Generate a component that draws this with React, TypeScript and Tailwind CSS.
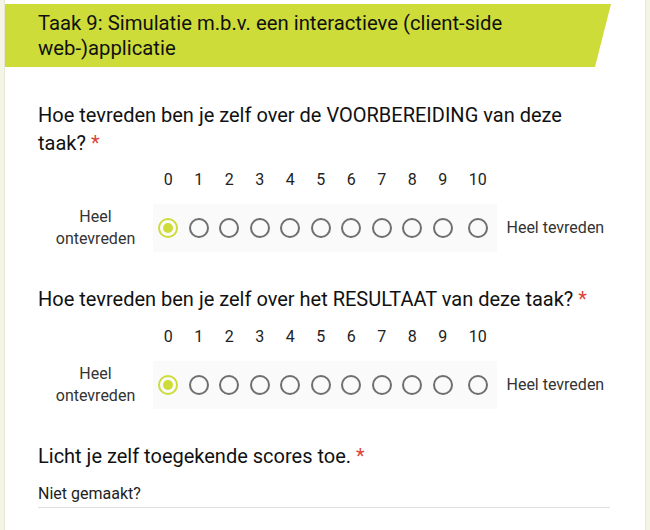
import React, { useState } from 'react';

const points = [0, 1, 2, 3, 4, 5, 6, 7, 8, 9, 10];

const Scale = ({ value, onChange, gap }: { value: number; onChange: (v: number) => void; gap: string }) => {
    return (
        <div className={'flex ' + gap}>
            <div className="w-[115px] flex flex-col justify-end">
                <div className="h-[48px] flex flex-col justify-center items-center text-[16px] leading-[22px] text-[#333]">
                    <span>Heel</span>
                    <span>ontevreden</span>
                </div>
            </div>
            {points.map((p) => (
                <div key={p} className="flex flex-col">
                    <div className="px-[10.75px] text-center text-[16px] leading-[20px] text-[#222] mb-[14px]">{p}</div>
                    <div className="h-[48px] flex items-center justify-center bg-[#fafafa]">
                        <button
                            type="button"
                            onClick={() => onChange(p)}
                            className={
                                p === value
                                    ? 'w-[20px] h-[20px] rounded-full border-2 border-[#cddc39] flex items-center justify-center'
                                    : 'w-[20px] h-[20px] rounded-full border-2 border-[#6f6f6f] flex items-center justify-center'
                            }
                        >
                            {p === value && <span className="w-[10px] h-[10px] rounded-full bg-[#cddc39]"></span>}
                        </button>
                    </div>
                </div>
            ))}
            <div className="flex flex-col justify-end">
                <div className="h-[48px] flex items-center pl-[9px] text-[16px] text-[#333]">Heel tevreden</div>
            </div>
        </div>
    );
};

const Required = () => <span className="text-[#db4437] ml-[5px]">*</span>;

const App = () => {
    const [prep, setPrep] = useState(0);
    const [result, setResult] = useState(0);
    const [note, setNote] = useState('Niet gemaakt?');

    return (
        <div className="min-h-screen bg-[#f4f5e4] px-[4px] font-['Roboto',sans-serif]">
            <div className="bg-white min-h-[530px] border-x border-[#e6e7d8] pt-[4px]">
                <div
                    className="h-[63px] bg-[#cddc39] pl-[33px] pr-[40px] pt-[7px] text-[20.3px] leading-[25px] text-[#111] w-[606px]"
                    style={{ clipPath: 'polygon(0 0, 100% 0, calc(100% - 16px) 100%, 0 100%)' }}
                >
                    Taak 9: Simulatie m.b.v. een interactieve (client-side web-)applicatie
                </div>

                <div className="pl-[33px] pr-[40px]">
                    <div className="mt-[34px] text-[20px] leading-[28px] text-[#111] max-w-[545px]">
                        Hoe tevreden ben je zelf over de VOORBEREIDING van deze taak?<Required />
                    </div>
                    <Scale value={prep} onChange={setPrep} gap="mt-[13px]" />

                    <div className="mt-[33px] text-[20px] leading-[28px] text-[#111]">
                        Hoe tevreden ben je zelf over het RESULTAAT van deze taak?<Required />
                    </div>
                    <Scale value={result} onChange={setResult} gap="mt-[14px]" />

                    <div className="mt-[33px] text-[20px] leading-[28px] text-[#111]">
                        Licht je zelf toegekende scores toe.<Required />
                    </div>
                    <input
                        className="mt-[14px] w-[572px] border-b border-[#e0e0e0] pb-[3px] text-[16px] leading-[20px] text-[#222] outline-none"
                        value={note}
                        onChange={(e) => setNote(e.target.value)}
                    />
                </div>
            </div>
        </div>
    );
};

export default App;
